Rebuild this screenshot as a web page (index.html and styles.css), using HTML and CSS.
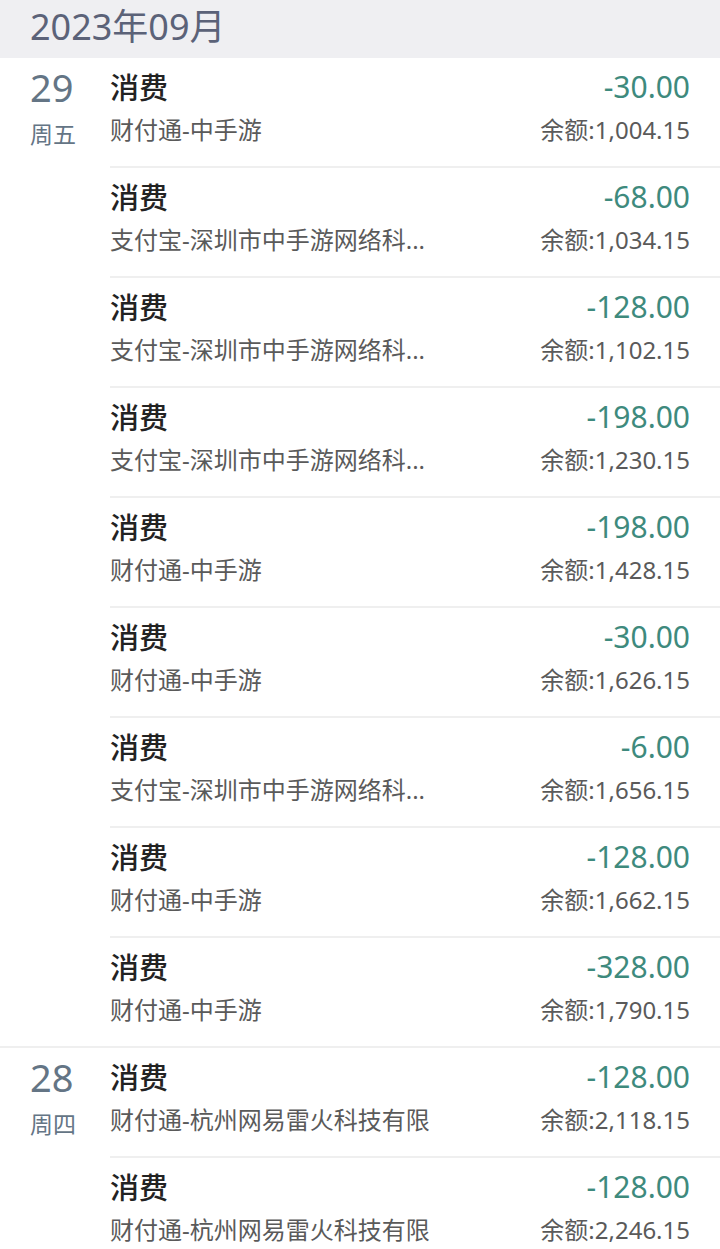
FILE: index.html
```html
<!DOCTYPE html>
<html lang="zh-CN">
<head>
    <meta charset="UTF-8">
    <meta name="viewport" content="width=device-width, initial-scale=1.0">
    <title>账单明细</title>
    <link rel="stylesheet" href="styles.css">
</head>
<body>
    <header class="month">2023年09月</header>

    <section class="day">
        <div class="date">
            <div class="num">29</div>
            <div class="week">周五</div>
        </div>
        <ul class="list">
            <li class="item">
                <div class="row"><span class="title">消费</span><span class="amount">-30.00</span></div>
                <div class="row"><span class="desc">财付通-中手游</span><span class="balance">余额:1,004.15</span></div>
            </li>
            <li class="item">
                <div class="row"><span class="title">消费</span><span class="amount">-68.00</span></div>
                <div class="row"><span class="desc">支付宝-深圳市中手游网络科...</span><span class="balance">余额:1,034.15</span></div>
            </li>
            <li class="item">
                <div class="row"><span class="title">消费</span><span class="amount">-128.00</span></div>
                <div class="row"><span class="desc">支付宝-深圳市中手游网络科...</span><span class="balance">余额:1,102.15</span></div>
            </li>
            <li class="item">
                <div class="row"><span class="title">消费</span><span class="amount">-198.00</span></div>
                <div class="row"><span class="desc">支付宝-深圳市中手游网络科...</span><span class="balance">余额:1,230.15</span></div>
            </li>
            <li class="item">
                <div class="row"><span class="title">消费</span><span class="amount">-198.00</span></div>
                <div class="row"><span class="desc">财付通-中手游</span><span class="balance">余额:1,428.15</span></div>
            </li>
            <li class="item">
                <div class="row"><span class="title">消费</span><span class="amount">-30.00</span></div>
                <div class="row"><span class="desc">财付通-中手游</span><span class="balance">余额:1,626.15</span></div>
            </li>
            <li class="item">
                <div class="row"><span class="title">消费</span><span class="amount">-6.00</span></div>
                <div class="row"><span class="desc">支付宝-深圳市中手游网络科...</span><span class="balance">余额:1,656.15</span></div>
            </li>
            <li class="item">
                <div class="row"><span class="title">消费</span><span class="amount">-128.00</span></div>
                <div class="row"><span class="desc">财付通-中手游</span><span class="balance">余额:1,662.15</span></div>
            </li>
            <li class="item">
                <div class="row"><span class="title">消费</span><span class="amount">-328.00</span></div>
                <div class="row"><span class="desc">财付通-中手游</span><span class="balance">余额:1,790.15</span></div>
            </li>
        </ul>
    </section>

    <section class="day">
        <div class="date">
            <div class="num">28</div>
            <div class="week">周四</div>
        </div>
        <ul class="list">
            <li class="item">
                <div class="row"><span class="title">消费</span><span class="amount">-128.00</span></div>
                <div class="row"><span class="desc">财付通-杭州网易雷火科技有限</span><span class="balance">余额:2,118.15</span></div>
            </li>
            <li class="item">
                <div class="row"><span class="title">消费</span><span class="amount">-128.00</span></div>
                <div class="row"><span class="desc">财付通-杭州网易雷火科技有限</span><span class="balance">余额:2,246.15</span></div>
            </li>
        </ul>
    </section>
</body>
</html>
```

FILE: styles.css
```css
/* 基础 */
body {
    margin: 0;
    background: #fff;
    font-family: "Noto Sans", "Noto Sans CJK SC", sans-serif;
}

/* 月份标题 */
.month {
    height: 58px;
    line-height: 54px;
    padding-left: 30px;
    background: #efeff2;
    color: #5b6278;
    font-size: 36px;
}

/* 每天一组 */
.day {
    display: flex;
    border-bottom: 2px solid #efefef;
}

.date {
    width: 80px;
    padding: 9px 0 0 30px;
    color: #647585;
}

.date .num {
    font-size: 38px;
    line-height: 40px;
}

.date .week {
    margin-top: 12px;
    font-size: 23px;
    line-height: 30px;
}

.list {
    flex: 1;
    list-style: none;
    margin: 0;
    padding: 0;
}

.item {
    height: 110px;
    padding: 11px 30px 0 0;
    box-sizing: border-box;
    border-bottom: 2px solid #efefef;
}

.item:last-child {
    height: 108px;
    border-bottom: none;
}

.row {
    display: flex;
    justify-content: space-between;
    align-items: center;
    height: 34px;
}

.row + .row {
    margin-top: 10px;
    height: 30px;
}

.title {
    font-size: 29px;
    font-weight: 500;
    color: #222;
}

.amount {
    font-size: 30px;
    color: #3e8a7d;
}

.desc,
.balance {
    font-size: 24px;
    color: #5a5a5a;
}
```
